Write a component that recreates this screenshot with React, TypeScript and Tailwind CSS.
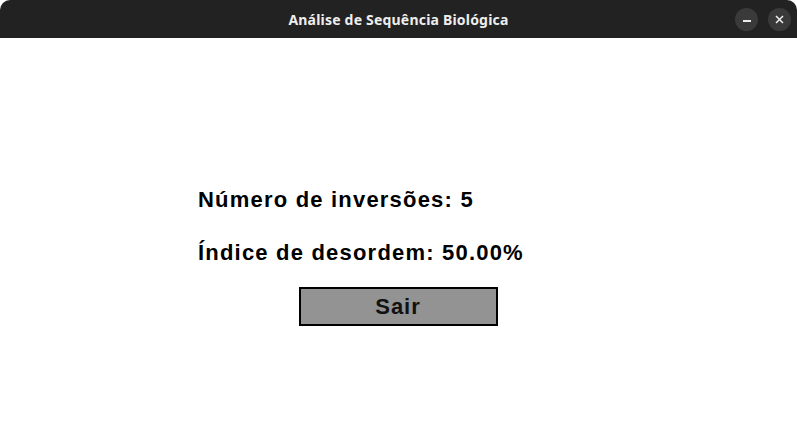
export default function App() {
  return (
    <div className="w-[797px] h-[435px] bg-white flex flex-col overflow-hidden">
      <div className="h-[38px] bg-[#222222] relative flex items-center justify-center rounded-t-[10px] shrink-0">
        <span className="text-[#eeeeee] text-[14px] font-bold tracking-[0.2px]" style={{ fontFamily: '"Noto Sans", "DejaVu Sans", sans-serif' }}>
          Análise de Sequência Biológica
        </span>
        <div className="absolute right-[6px] top-0 h-full flex items-center gap-[10px]">
          <div className="w-[23px] h-[23px] rounded-full bg-[#3a3a3a] flex items-center justify-center">
            <div className="w-[8px] h-[1.5px] bg-[#eeeeee] mt-[4px]" />
          </div>
          <div className="w-[23px] h-[23px] rounded-full bg-[#3a3a3a] flex items-center justify-center">
            <svg width="9" height="9" viewBox="0 0 9 9">
              <path d="M1 1L8 8M8 1L1 8" stroke="#eeeeee" strokeWidth="1.5" />
            </svg>
          </div>
        </div>
      </div>
      <div className="flex-1 flex flex-col" style={{ fontFamily: '"Liberation Sans", Arial, sans-serif' }}>
        <div className="mt-[146px] ml-[198px] text-[22px] font-bold text-black leading-[32px] tracking-[1.2px]">
          Número de inversões: 5
        </div>
        <div className="mt-[21px] ml-[198px] text-[22px] font-bold text-black leading-[32px] tracking-[1.2px]">
          Índice de desordem: 50.00%
        </div>
        <div className="mt-[18px] self-center ml-[-1px] w-[199px] h-[39px] border-2 border-black bg-[#939393] flex items-center justify-center text-[22px] font-bold text-[#111] tracking-[1px]">
          Sair
        </div>
      </div>
    </div>
  );
}
